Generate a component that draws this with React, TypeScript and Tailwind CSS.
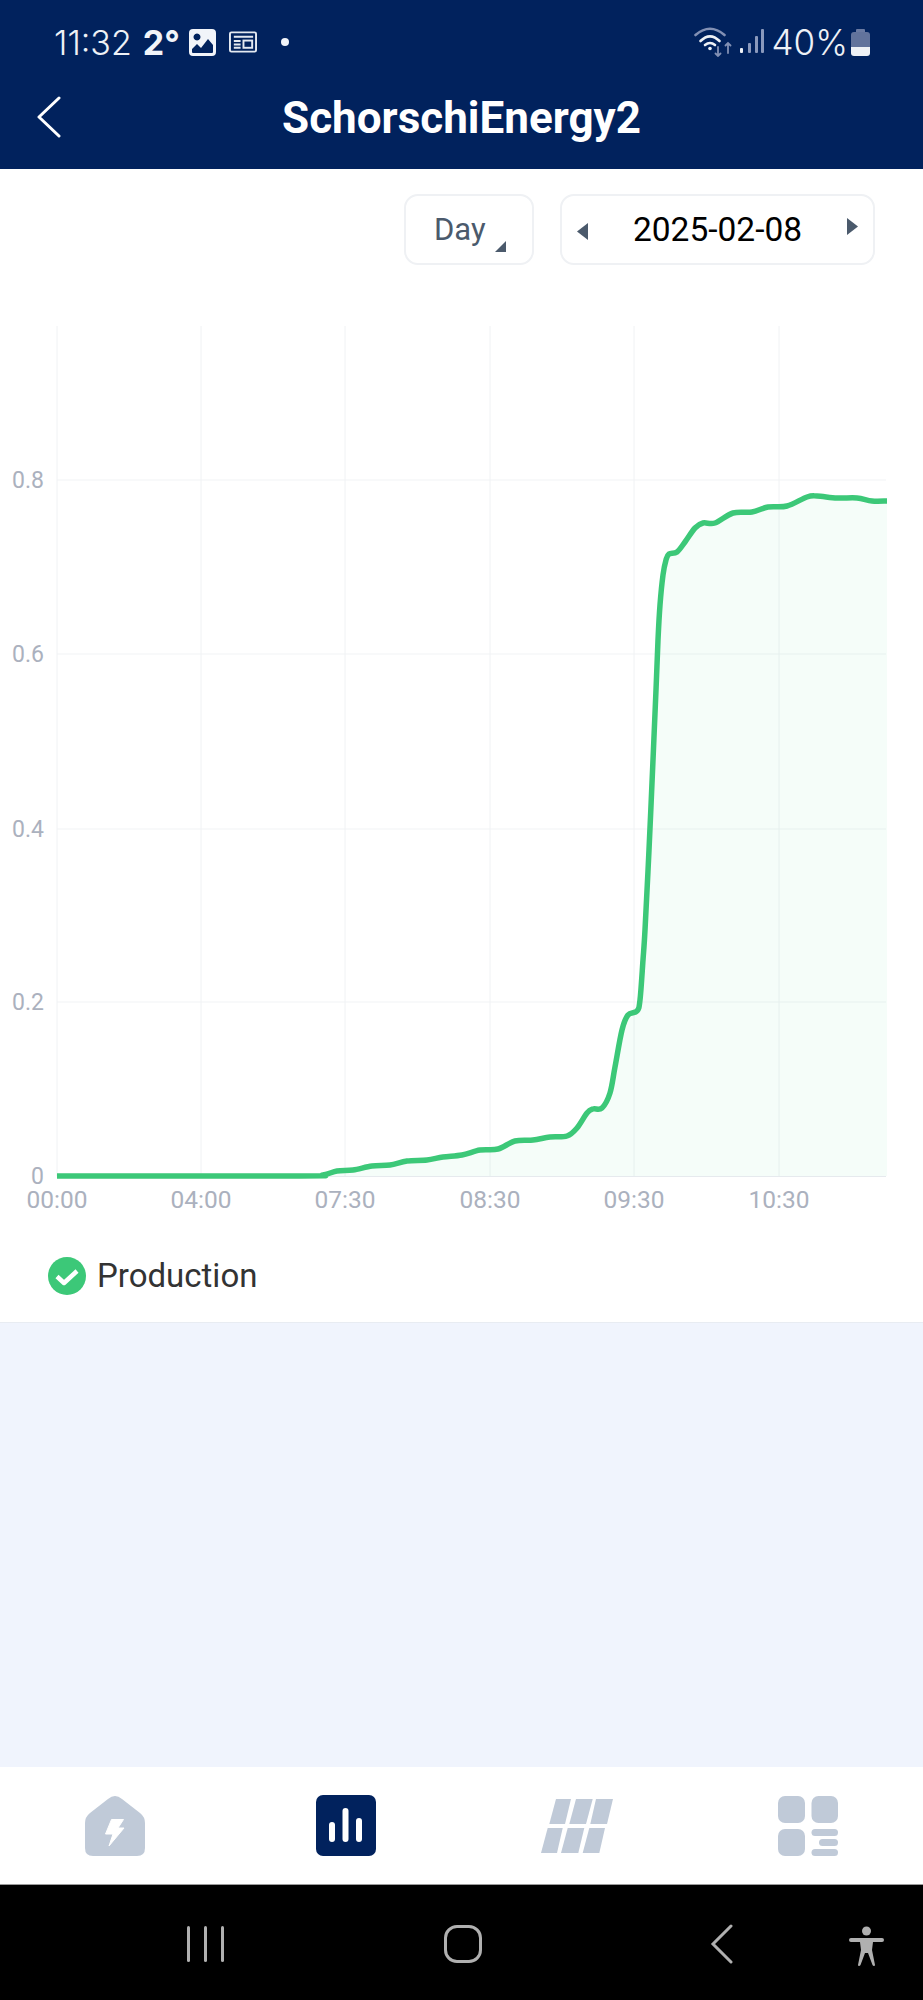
import React from 'react'

const points: [number, number][] = [
  [57, 1176], [300, 1176], [323, 1175], [337, 1171], [353, 1170], [372, 1166], [390, 1165], [407, 1161],
  [427, 1160], [443, 1157], [462, 1155], [480, 1150], [498, 1149], [515, 1141], [533, 1140], [550, 1137],
  [567, 1136], [577, 1128], [587, 1113], [593, 1109], [602, 1108], [610, 1093], [615, 1067], [622, 1030],
  [628, 1015], [637, 1011], [640, 1000], [643, 960], [645, 930], [649, 850], [653, 760], [656, 690],
  [658, 640], [660, 605], [663, 575], [666, 560], [669, 554], [677, 552], [685, 542], [695, 528], [703, 523], [715, 523],
  [733, 513], [752, 512], [768, 507], [787, 506], [807, 497], [817, 496], [837, 498], [857, 498],
  [872, 501], [887, 501],
]

// catmull-rom through the sampled points
const linePath = () => {
  let d = `M${points[0][0]} ${points[0][1]}`
  for (let i = 0; i < points.length - 1; i++) {
    const p0 = points[Math.max(i - 1, 0)]
    const p1 = points[i]
    const p2 = points[i + 1]
    const p3 = points[Math.min(i + 2, points.length - 1)]
    const c1x = p1[0] + (p2[0] - p0[0]) / 6
    const c1y = p1[1] + (p2[1] - p0[1]) / 6
    const c2x = p2[0] - (p3[0] - p1[0]) / 6
    const c2y = p2[1] - (p3[1] - p1[1]) / 6
    d += ` C${c1x} ${c1y} ${c2x} ${c2y} ${p2[0]} ${p2[1]}`
  }
  return d
}

const yTicks = [
  { y: 480, label: '0.8' },
  { y: 654, label: '0.6' },
  { y: 829, label: '0.4' },
  { y: 1002, label: '0.2' },
]
const xTicks = [
  { x: 57, label: '00:00' },
  { x: 201, label: '04:00' },
  { x: 345, label: '07:30' },
  { x: 490, label: '08:30' },
  { x: 634, label: '09:30' },
  { x: 779, label: '10:30' },
]

const Chart = () => {
  const line = linePath()
  return (
    <svg viewBox="0 320 923 900" className="mt-[55px] block h-[900px] w-full">
      {yTicks.map((t) => (
        <line key={t.y} x1="57" x2="886" y1={t.y} y2={t.y} stroke="#f1f3f5" strokeWidth="1" />
      ))}
      {xTicks.map((t) => (
        <line key={t.x} x1={t.x} x2={t.x} y1="326" y2="1176" stroke="#f0f2f4" strokeWidth="1" />
      ))}
      <line x1="57" x2="886" y1="1176.5" y2="1176.5" stroke="#e6eaee" strokeWidth="1" />
      <path d={`${line} L887 1176 L57 1176 Z`} fill="#3ed882" fillOpacity="0.05" />
      <path d={line} fill="none" stroke="#3cc878" strokeWidth="5.5" strokeLinejoin="round" strokeLinecap="butt" />
      <g fill="#abb1be" fontFamily="Roboto, sans-serif">
        {yTicks.map((t) => (
          <text key={t.y} x="44" y={t.y + 8} textAnchor="end" fontSize="23">
            {t.label}
          </text>
        ))}
        <text x="44" y="1184" textAnchor="end" fontSize="23">
          0
        </text>
        {xTicks.map((t) => (
          <text key={t.x} x={t.x} y="1208" textAnchor="middle" fontSize="24.5">
            {t.label}
          </text>
        ))}
      </g>
    </svg>
  )
}

const StatusIcons = () => (
  <>
    <svg width="27" height="27" viewBox="0 0 27 27" className="ml-[9px]">
      <path
        fillRule="evenodd"
        fill="#f1f4f9"
        d="M4 0H23A4 4 0 0 1 27 4V23A4 4 0 0 1 23 27H4A4 4 0 0 1 0 23V4A4 4 0 0 1 4 0ZM3 20V23Q3 24 4 24H23Q24 24 24 23V16L19 10L12 19L8 15ZM8 4.5A3.5 3.5 0 1 0 8.01 4.5Z"
      />
    </svg>
    <svg width="28" height="22" viewBox="0 0 29 22" className="ml-[13px]" fill="none" stroke="#e4e9f1" strokeWidth="2">
      <rect x="1" y="1" width="27" height="20" rx="1.5" />
      <path d="M5 5.5H25M5 10H12M5 13.5H12M5 17H12" />
      <rect x="15" y="9.5" width="9" height="7.5" />
    </svg>
    <span className="ml-[24px] size-[8px] rounded-full bg-[#f1f4f9]" />
  </>
)

const WifiSignal = () => (
  <>
    <svg width="40" height="30" viewBox="0 0 40 30" fill="none" strokeLinecap="round">
      <path d="M1.5 8Q16 -4.5 30.5 8" strokeWidth="2.6" stroke="#8290b4" />
      <path d="M6.5 14Q16 4.5 25.5 14" strokeWidth="2.6" stroke="#eef1f6" />
      <path d="M11 18Q16 14 21 18" strokeWidth="2.6" stroke="#eef1f6" />
      <circle cx="16" cy="21.5" r="1.8" fill="#eef1f6" />
      <path d="M24 20V29M21.5 26.5L24 29L26.5 26.5M34 26V16M31.5 18.5L34 16L36.5 18.5" strokeWidth="1.8" stroke="#8290b4" />
    </svg>
    <svg width="26" height="30" viewBox="0 0 26 30" className="ml-[5px]" fill="#8a99bc">
      <rect x="1" y="21" width="3" height="5" rx="1" fill="#eef1f6" />
      <rect x="9" y="16" width="3" height="10" rx="1" />
      <rect x="16" y="9" width="3" height="17" rx="1" />
      <rect x="22" y="2" width="3" height="24" rx="1" />
    </svg>
  </>
)

const Battery = () => (
  <div className="ml-[3px] flex flex-col items-center">
    <span className="h-[3px] w-[9px] rounded-t-[1px] bg-[#6a7aa2]" />
    <div className="flex h-[24px] w-[19px] flex-col overflow-hidden rounded-[3px]">
      <span className="flex-1 bg-[#62739c]" />
      <span className="h-[9px] bg-[#eef1f6]" />
    </div>
  </div>
)

const ControlBox = ({ className, children }: { className: string; children: React.ReactNode }) => (
  <div className={`relative flex h-[71px] items-center rounded-[14px] border-2 border-[#eff1f4] bg-white pt-[1px] ${className}`}>
    {children}
  </div>
)

// solar panel cells, traced from the tab icon
const panelCells = [
  '15,0 30,0 24,25 8.3,25',
  '35,0 51.7,0 45,25 28.3,25',
  '55,0 72,0 66,25 49.3,25',
  '6.7,29 21.7,29 16,54 0,54',
  '26.7,29 43.3,29 37.3,54 20,54',
  '48.3,29 64,29 58.3,54 41.7,54',
]

const TabBar = () => (
  <div className="grid h-[117px] grid-cols-4 items-center bg-white">
    <div className="flex justify-center">
      <svg width="60" height="60" viewBox="0 0 60 60">
        <path
          fill="#c0cad8"
          d="M23 3Q30 -3 37 3L55 17Q60 21 60 27V52Q60 60 52 60H8Q0 60 0 52V27Q0 21 5 17Z"
        />
        <path fill="#fff" stroke="#fff" strokeWidth="1" strokeLinejoin="round" d="M26.5 23.5H38.5L33 32H39L24 50L28 38H20.5Z" />
      </svg>
    </div>
    <div className="flex justify-center">
      <svg width="60" height="61" viewBox="0 0 60 61">
        <rect width="60" height="61" rx="7" fill="#01225d" />
        <rect x="13" y="27" width="6" height="20" rx="3" fill="#fff" />
        <rect x="26.5" y="13" width="6" height="34" rx="3" fill="#fff" />
        <rect x="40" y="23" width="6" height="24" rx="3" fill="#fff" />
      </svg>
    </div>
    <div className="flex justify-center">
      <svg width="72" height="54" viewBox="0 0 72 54" fill="#c0cad8">
        {panelCells.map((c) => (
          <polygon key={c} points={c} />
        ))}
      </svg>
    </div>
    <div className="flex justify-center">
      <svg width="60" height="60" viewBox="0 0 60 60" fill="#c0cad8">
        <rect x="0" y="0" width="27" height="27" rx="7" />
        <rect x="33.5" y="0" width="26.5" height="27" rx="7" />
        <rect x="0" y="33" width="27" height="27" rx="7" />
        <rect x="33.5" y="33" width="26.5" height="7" rx="3.5" />
        <rect x="41" y="43" width="19" height="7" rx="3.5" />
        <rect x="33.5" y="53" width="26.5" height="7" rx="3.5" />
      </svg>
    </div>
  </div>
)

const NavBar = () => (
  <div className="relative h-[116px] border-t border-[#9a9a9a] bg-black">
    <div className="absolute top-[41px] left-[187px] flex gap-[14px]">
      <span className="h-[36px] w-[3px] rounded-full bg-[#b0b0b0]" />
      <span className="h-[36px] w-[3px] rounded-full bg-[#b0b0b0]" />
      <span className="h-[36px] w-[3px] rounded-full bg-[#b0b0b0]" />
    </div>
    <div className="absolute top-[40px] left-[444px] h-[38px] w-[38px] rounded-[13px] border-[3px] border-[#b0b0b0]" />
    <svg width="24" height="40" viewBox="0 0 24 40" className="absolute top-[39px] left-[710px]" fill="none" stroke="#b0b0b0" strokeWidth="3" strokeLinecap="round">
      <path d="M21 2L3 20L21 38" />
    </svg>
    <svg width="36" height="42" viewBox="0 0 36 42" className="absolute top-[40px] left-[849px]" fill="#b0b0b0">
      <circle cx="17.5" cy="6" r="4.5" />
      <path d="M2 13H33Q35 13 35 15Q35 17 33 17H24L23 25L26 40Q26 41 25 41Q24 41 23.5 40L19 28H16L11.5 40Q11 41 10 41Q9 41 9 40L12 25L11 17H2Q0 17 0 15Q0 13 2 13Z" />
    </svg>
  </div>
)

export default function App() {
  return (
    <div className="flex h-[2000px] w-full flex-col overflow-hidden bg-[#f0f4fd] font-['Roboto',sans-serif]">
      <header className="h-[169px] bg-[#01225d]">
        <div className="flex h-[84px] items-center pr-[53px] pl-[54px] font-['Inter',sans-serif]">
          <span className="text-[34px] font-light text-[#eef1f6]">11:32</span>
          <span className="ml-[11px] text-[34px] font-bold text-[#f1f4f9]">2°</span>
          <StatusIcons />
          <div className="ml-auto flex items-center">
            <WifiSignal />
            <span className="ml-[7px] text-[35px] font-light text-[#eef1f6]">40%</span>
            <Battery />
          </div>
        </div>
        <div className="relative flex h-[68px] items-center justify-center">
          <svg width="24" height="42" viewBox="0 0 24 42" className="absolute top-[12px] left-[37px]" fill="none" stroke="#fff" strokeWidth="3" strokeLinecap="round" strokeLinejoin="round">
            <path d="M22 2L2 21L22 40" />
          </svg>
          <h1 className="text-[44px] font-bold text-white">SchorschiEnergy2</h1>
        </div>
      </header>

      <main className="h-[1154px] border-b border-[#e8ecf2] bg-white">
        <div className="flex justify-end gap-[26px] pt-[25px] pr-[48px]">
          <ControlBox className="w-[130px] pl-[28px] text-[31px] text-[#4b5a6c]">
            <span>Day</span>
            <svg width="11" height="11" viewBox="0 0 11 11" className="absolute top-[45px] left-[89px]" fill="#4b5a6c">
              <path d="M11 0V11H0Z" />
            </svg>
          </ControlBox>
          <ControlBox className="w-[315px] justify-center text-[33.5px] text-black">
            <svg width="11" height="17" viewBox="0 0 11 17" className="absolute top-[27px] left-[15px]" fill="#4b5a6c">
              <path d="M11 0V17L0 8.5Z" />
            </svg>
            <span>2025-02-08</span>
            <svg width="11" height="17" viewBox="0 0 11 17" className="absolute top-[22px] right-[15px]" fill="#4b5a6c">
              <path d="M0 0V17L11 8.5Z" />
            </svg>
          </ControlBox>
        </div>
        <Chart />
        <div className="mt-[31px] flex items-center gap-[11px] pl-[48px]">
          <svg width="38" height="38" viewBox="0 0 38 38">
            <circle cx="19" cy="19" r="19" fill="#3cc878" />
            <path d="M9 19.5L16 26L29 14" fill="none" stroke="#fff" strokeWidth="4.5" strokeLinejoin="round" />
          </svg>
          <span className="text-[33px] text-[#333333]">Production</span>
        </div>
      </main>

      <div className="flex-1" />
      <TabBar />
      <NavBar />
    </div>
  )
}
